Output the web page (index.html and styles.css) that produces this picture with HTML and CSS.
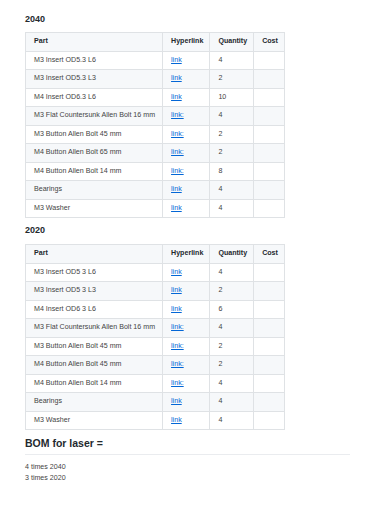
FILE: index.html
```html
<!DOCTYPE html>
<html lang="en">
<head>
    <meta charset="utf-8">
    <meta name="viewport" content="width=device-width, initial-scale=1.0">
    <title>BOM</title>
    <link rel="stylesheet" href="styles.css">
</head>

<body>
    <main class="markdown-body">
        <h3 class="first">2040</h3>
        <table>
            <thead>
                <tr><th>Part</th><th>Hyperlink</th><th>Quantity</th><th>Cost</th></tr>
            </thead>
            <tbody>
                <tr><td>M3 Insert OD5.3 L6</td><td><a href="#">link</a></td><td>4</td><td></td></tr>
                <tr><td>M3 Insert OD5.3 L3</td><td><a href="#">link</a></td><td>2</td><td></td></tr>
                <tr><td>M4 Insert OD6.3 L6</td><td><a href="#">link</a></td><td>10</td><td></td></tr>
                <tr><td>M3 Flat Countersunk Allen Bolt 16 mm</td><td><a href="#">link:</a></td><td>4</td><td></td></tr>
                <tr><td>M3 Button Allen Bolt 45 mm</td><td><a href="#">link:</a></td><td>2</td><td></td></tr>
                <tr><td>M4 Button Allen Bolt 65 mm</td><td><a href="#">link:</a></td><td>2</td><td></td></tr>
                <tr><td>M4 Button Allen Bolt 14 mm</td><td><a href="#">link:</a></td><td>8</td><td></td></tr>
                <tr><td>Bearings</td><td><a href="#">link</a></td><td>4</td><td></td></tr>
                <tr><td>M3 Washer</td><td><a href="#">link</a></td><td>4</td><td></td></tr>
            </tbody>
        </table>

        <h3>2020</h3>
        <table>
            <thead>
                <tr><th>Part</th><th>Hyperlink</th><th>Quantity</th><th>Cost</th></tr>
            </thead>
            <tbody>
                <tr><td>M3 Insert OD5 3 L6</td><td><a href="#">link</a></td><td>4</td><td></td></tr>
                <tr><td>M3 Insert OD5 3 L3</td><td><a href="#">link</a></td><td>2</td><td></td></tr>
                <tr><td>M4 Insert OD6 3 L6</td><td><a href="#">link</a></td><td>6</td><td></td></tr>
                <tr><td>M3 Flat Countersunk Allen Bolt 16 mm</td><td><a href="#">link:</a></td><td>4</td><td></td></tr>
                <tr><td>M3 Button Allen Bolt 45 mm</td><td><a href="#">link:</a></td><td>2</td><td></td></tr>
                <tr><td>M4 Button Allen Bolt 45 mm</td><td><a href="#">link:</a></td><td>2</td><td></td></tr>
                <tr><td>M4 Button Allen Bolt 14 mm</td><td><a href="#">link:</a></td><td>4</td><td></td></tr>
                <tr><td>Bearings</td><td><a href="#">link</a></td><td>4</td><td></td></tr>
                <tr><td>M3 Washer</td><td><a href="#">link</a></td><td>4</td><td></td></tr>
            </tbody>
        </table>

        <h2>BOM for laser =</h2>
        <p>4 times 2040<br>3 times 2020</p>
    </main>
</body>
</html>
```

FILE: styles.css
```css
body {
    margin: 0;
    background-color: #fff;
    color: #24292e;
    font-family: "Liberation Sans", Arial, sans-serif;
    font-size: 7.1px;
}

.markdown-body {
    padding: 0 25px;
}

h3 {
    font-size: 9px;
    line-height: 12px;
    font-weight: bold;
    margin: 6px 0 8px;
}

h3.first {
    margin-top: 13px;
    margin-bottom: 7px;
}

table {
    border-collapse: collapse;
    border-spacing: 0;
}

th,
td {
    border: 1px solid #dfe2e5;
    padding: 0 7px 0 8px;
    line-height: 17.5px;
    text-align: left;
    white-space: nowrap;
}

th {
    font-weight: bold;
    color: #24292e;
    padding-right: 6px;
}

td {
    color: #444;
}

thead tr,
tbody tr:nth-child(2n) {
    background-color: #f6f8fa;
}

a {
    color: #0366d6;
    text-decoration: underline;
}

h2 {
    font-size: 10.5px;
    line-height: 13px;
    font-weight: bold;
    margin: 7px 0 7px;
    padding-bottom: 4px;
    border-bottom: 1px solid #eaecef;
}

p {
    margin: 0;
    line-height: 11px;
    color: #444;
}
```
